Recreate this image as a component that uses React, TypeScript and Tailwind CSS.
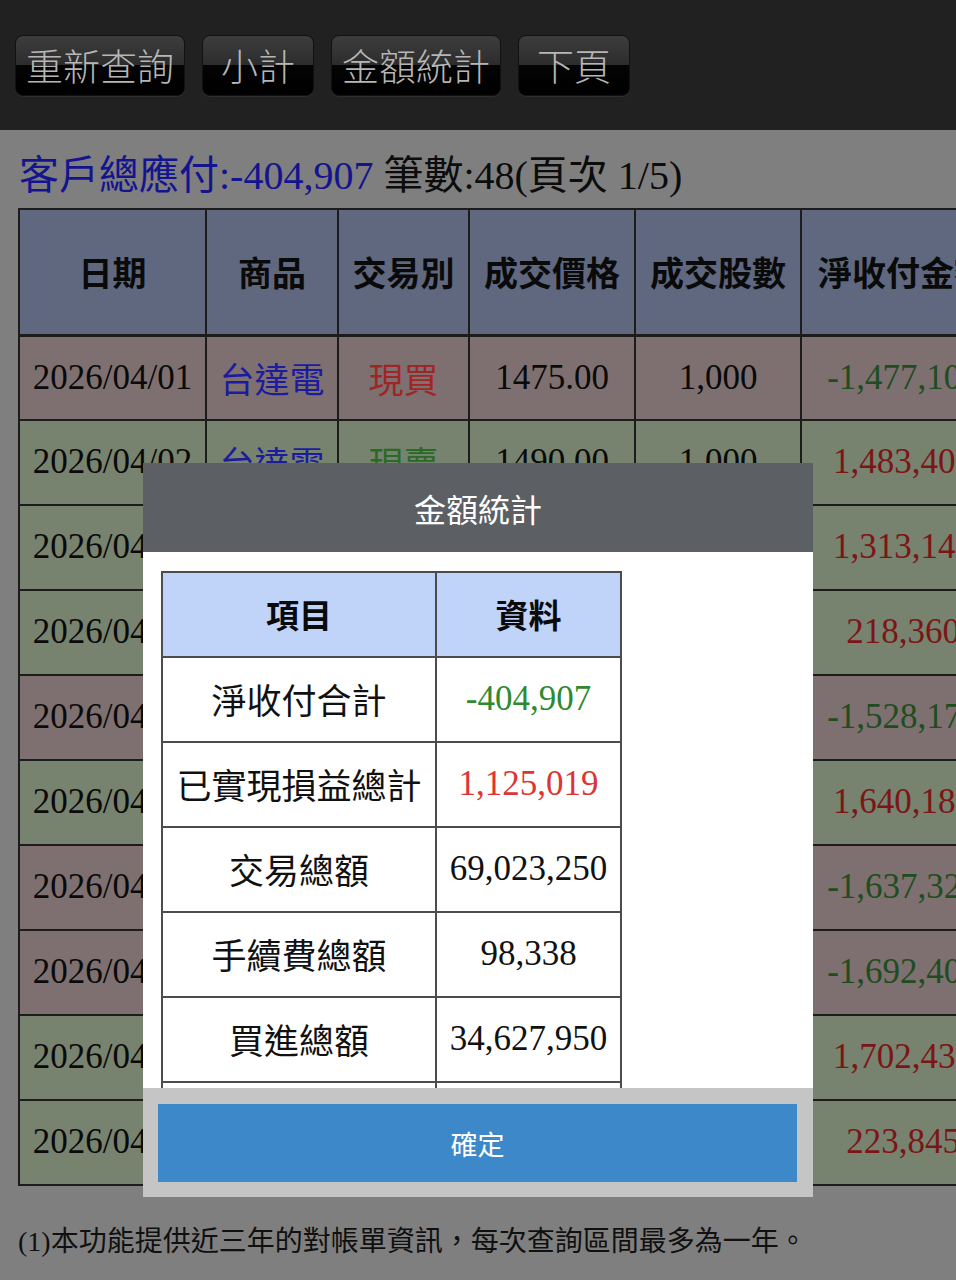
import React from "react";

type Row = {
  date: string;
  side: "buy" | "sell";
  price: string;
  qty: string;
  net: string;
};

const rows: Row[] = [
  { date: "2026/04/01", side: "buy", price: "1475.00", qty: "1,000", net: "-1,477,100" },
  { date: "2026/04/02", side: "sell", price: "1490.00", qty: "1,000", net: "1,483,407" },
  { date: "2026/04/07", side: "sell", price: "1320.00", qty: "1,000", net: "1,313,145" },
  { date: "2026/04/08", side: "sell", price: "219.50", qty: "1,000", net: "218,360" },
  { date: "2026/04/09", side: "buy", price: "1526.00", qty: "1,000", net: "-1,528,170" },
  { date: "2026/04/10", side: "sell", price: "1649.00", qty: "1,000", net: "1,640,184" },
  { date: "2026/04/13", side: "buy", price: "1635.00", qty: "1,000", net: "-1,637,325" },
  { date: "2026/04/14", side: "buy", price: "1690.00", qty: "1,000", net: "-1,692,405" },
  { date: "2026/04/15", side: "sell", price: "1711.50", qty: "1,000", net: "1,702,436" },
  { date: "2026/04/16", side: "sell", price: "225.00", qty: "1,000", net: "223,845" },
];

const stats: { label: string; value: string; tone?: "neg" | "pos" }[] = [
  { label: "淨收付合計", value: "-404,907", tone: "neg" },
  { label: "已實現損益總計", value: "1,125,019", tone: "pos" },
  { label: "交易總額", value: "69,023,250" },
  { label: "手續費總額", value: "98,338" },
  { label: "買進總額", value: "34,627,950" },
  { label: "賣出總額", value: "34,395,300" },
];

const toolbar = [
  { label: "重新查詢", w: "w-[170px]" },
  { label: "小計", w: "w-[112px]" },
  { label: "金額統計", w: "w-[170px]" },
  { label: "下頁", w: "w-[112px]" },
];

function ToolButton({ label, w }: { label: string; w: string }) {
  return (
    <button
      className={`${w} relative h-[61px] overflow-hidden rounded-[8px] border border-[#111] bg-[linear-gradient(to_bottom,#3d3d3d_0%,#2c2c2c_50%,#040404_50%,#000_100%)] shadow-[0_1px_0_#2e2e2e] flex items-center justify-center`}
    >
      <span className="font-['Noto_Sans_CJK_TC',sans-serif] font-light text-[37px] leading-none text-[#b6b6b6]">
        {label}
      </span>
    </button>
  );
}

export default function App() {
  return (
    <div className="relative w-[956px] h-[1280px] overflow-hidden bg-[#7f7f7f] font-['Liberation_Serif','Noto_Sans_CJK_TC',serif]">
      {/* top action bar */}
      <div className="h-[130px] bg-[#212121] flex items-center gap-[17px] pl-[15px]">
        {toolbar.map((b) => (
          <ToolButton key={b.label} label={b.label} w={b.w} />
        ))}
      </div>

      {/* summary line */}
      <div className="pt-[22px] pl-[19px] text-[40px] leading-[48px] whitespace-nowrap">
        <span className="text-[#14148e]">客戶總應付:-404,907</span>
        <span className="text-[#0c0c0c]"> 筆數:48(頁次 1/5)</span>
      </div>

      {/* statement table */}
      <table className="mt-[8px] ml-[18px] w-[986px] table-fixed border-collapse border-2 border-[#1c1c1c] text-[35px]">
        <colgroup>
          <col className="w-[187px]" />
          <col className="w-[132px]" />
          <col className="w-[131px]" />
          <col className="w-[166px]" />
          <col className="w-[166px]" />
          <col className="w-[204px]" />
        </colgroup>
        <thead>
          <tr className="h-[126px] bg-[#5f687f]">
            {["日期", "商品", "交易別", "成交價格", "成交股數", "淨收付金額"].map((h) => (
              <th
                key={h}
                className="border-2 border-b-[3px] border-[#1c1c1c] p-0 text-center align-middle font-['Noto_Sans_CJK_TC',sans-serif] font-bold text-[34px] text-[#0a0a0a] whitespace-nowrap overflow-hidden"
              >
                {h}
              </th>
            ))}
          </tr>
        </thead>
        <tbody>
          {rows.map((r) => {
            const buy = r.side === "buy";
            return (
              <tr key={r.date} className={`h-[85px] ${buy ? "bg-[#7e7070]" : "bg-[#77826f]"}`}>
                <td className="border-2 border-[#1c1c1c] p-0 text-center text-[#0a0a0a] whitespace-nowrap">{r.date}</td>
                <td className="border-2 border-[#1c1c1c] p-0 text-center text-[#1c1c9e] font-['Noto_Sans_CJK_TC',sans-serif] whitespace-nowrap">
                  台達電
                </td>
                <td
                  className={`border-2 border-[#1c1c1c] p-0 text-center font-['Noto_Sans_CJK_TC',sans-serif] whitespace-nowrap ${
                    buy ? "text-[#a02626]" : "text-[#2a6a26]"
                  }`}
                >
                  {buy ? "現買" : "現賣"}
                </td>
                <td className="border-2 border-[#1c1c1c] p-0 text-center text-[#0a0a0a] whitespace-nowrap">{r.price}</td>
                <td className="border-2 border-[#1c1c1c] p-0 text-center text-[#0a0a0a] whitespace-nowrap">{r.qty}</td>
                <td
                  className={`border-2 border-[#1c1c1c] p-0 text-center whitespace-nowrap ${
                    buy ? "text-[#1f4d1f]" : "text-[#7c1616]"
                  }`}
                >
                  {r.net}
                </td>
              </tr>
            );
          })}
        </tbody>
      </table>

      {/* notes */}
      <p className="mt-[36px] pl-[18px] text-[28px] leading-[40px] text-[#101010] whitespace-nowrap">
        (1)本功能提供近三年的對帳單資訊，每次查詢區間最多為一年。
      </p>

      {/* amount summary dialog */}
      <div className="absolute left-[143px] top-[463px] w-[670px] h-[734px] flex flex-col bg-white">
        <div className="h-[89px] shrink-0 bg-[#5c6064] flex items-center justify-center">
          <span className="font-['Noto_Sans_CJK_TC',sans-serif] text-[32px] text-white leading-none">金額統計</span>
        </div>
        <div className="flex-1 overflow-hidden pt-[19px] pl-[18px]">
          <table className="w-[459px] table-fixed border-collapse border-2 border-[#4c4c4c] text-[35px]">
            <colgroup>
              <col className="w-[274px]" />
              <col className="w-[185px]" />
            </colgroup>
            <thead>
              <tr className="h-[85px] bg-[#c0d3f9]">
                <th className="border-2 border-[#4c4c4c] p-0 font-['Noto_Sans_CJK_TC',sans-serif] font-bold text-[33px] text-[#0a0a0a]">
                  項目
                </th>
                <th className="border-2 border-[#4c4c4c] p-0 font-['Noto_Sans_CJK_TC',sans-serif] font-bold text-[33px] text-[#0a0a0a]">
                  資料
                </th>
              </tr>
            </thead>
            <tbody>
              {stats.map((s) => (
                <tr key={s.label} className="h-[85px]">
                  <td className="border-2 border-[#4c4c4c] p-0 text-center font-['Noto_Sans_CJK_TC',sans-serif] text-[#111] whitespace-nowrap">
                    {s.label}
                  </td>
                  <td
                    className={`border-2 border-[#4c4c4c] p-0 text-center whitespace-nowrap ${
                      s.tone === "neg" ? "text-[#2f8a2f]" : s.tone === "pos" ? "text-[#de3434]" : "text-[#111]"
                    }`}
                  >
                    {s.value}
                  </td>
                </tr>
              ))}
            </tbody>
          </table>
        </div>
        <div className="h-[109px] shrink-0 bg-[#c5c5c5] pt-[16px] pl-[15px] pr-[16px] pb-[15px]">
          <button className="w-full h-full bg-[#3d88c9] flex items-center justify-center">
            <span className="font-['Noto_Sans_CJK_TC',sans-serif] text-[27px] text-white leading-none">確定</span>
          </button>
        </div>
      </div>
    </div>
  );
}
